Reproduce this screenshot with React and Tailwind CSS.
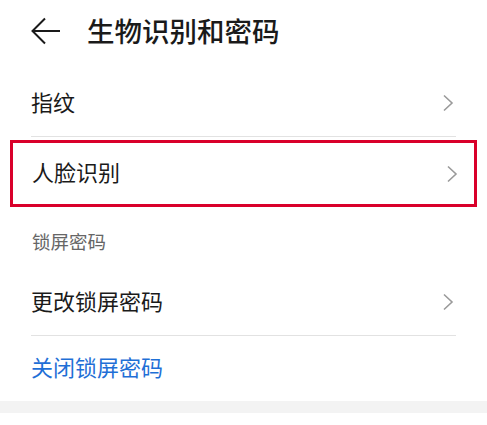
import React from "react";

const font = { fontFamily: '"Noto Sans CJK SC", "Noto Sans", sans-serif' };

function Chevron() {
    return (
        <svg width="12" height="18" viewBox="0 0 12 18" fill="none" stroke="#9a9a9a" strokeWidth="1.6">
            <path d="M2 1.5l8 7.5-8 7.5" />
        </svg>
    );
}

function Row({ label, divider }) {
    return (
        <div className={`flex items-center justify-between h-[67px] mx-[31px] ${divider ? "border-b border-[#e2e2e2]" : ""}`}>
            <span className="text-[22px] text-[#1a1a1a] pb-[3px]">{label}</span>
            <span className="mr-[2px]"><Chevron /></span>
        </div>
    );
}

export default function App() {
    return (
        <div className="w-[487px] h-[425px] bg-white overflow-hidden" style={font}>
            <div className="flex items-center h-[62px] pl-[31px]">
                <svg width="30" height="28" viewBox="0 0 30 28" fill="none" stroke="#1a1a1a" strokeWidth="2">
                    <path d="M29 14H2M14 1.5L1.5 14 14 26.5" />
                </svg>
                <span className="ml-[26px] text-[27.5px] text-[#1a1a1a] font-medium leading-none">生物识别和密码</span>
            </div>
            <div className="mt-[8px]">
                <Row label="指纹" divider />
                <div className="mx-[10px] mt-[3px] border-[3px] border-[#d9002a]">
                    <div className="flex items-center justify-between h-[61px] pl-[19px] pr-[16px]">
                        <span className="text-[22px] text-[#1a1a1a] pb-[5px]">人脸识别</span>
                        <Chevron />
                    </div>
                </div>
            </div>
            <div className="pl-[32px] pt-[21px] h-[62px] text-[18.5px] text-[#666]">锁屏密码</div>
            <Row label="更改锁屏密码" divider />
            <div className="flex items-center h-[65px] mx-[31px] pb-[5px] text-[22px] text-[#1f6fd6]">关闭锁屏密码</div>
            <div className="h-[12px] bg-[#f3f3f3]" />
        </div>
    );
}
